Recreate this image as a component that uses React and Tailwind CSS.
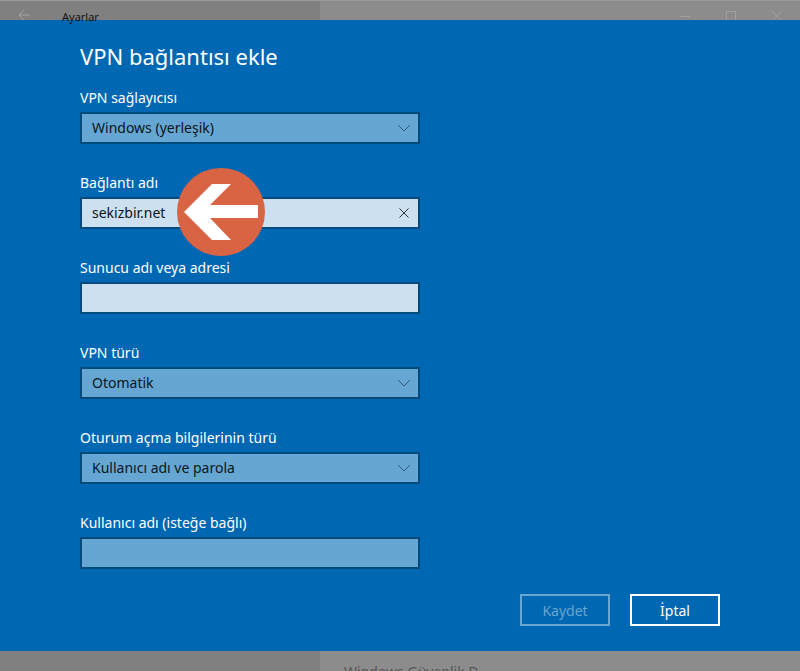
import React from "react";

function Chevron() {
  return (
    <svg width="14" height="8" viewBox="0 0 14 8" fill="none" stroke="#35597a" strokeWidth="1">
      <path d="M1 1l6 6 6-6" />
    </svg>
  );
}

function Select({ text }) {
  return (
    <div className="w-[340px] h-8 border-2 border-[#004a7c] bg-[#66a6d2] flex items-center justify-between pl-[10px] pr-[7px] text-[14px] text-[#0a1520]">
      <span className="-mt-[2px]">{text}</span>
      <Chevron />
    </div>
  );
}

function Input({ light, children }) {
  return (
    <div className={`w-[340px] h-8 border-2 border-[#004a7c] flex items-center justify-between pl-[10px] pr-[9px] text-[14px] text-[#0a1520] ${light ? "bg-[#cce0ef]" : "bg-[#66a6d2]"}`}>
      {children}
    </div>
  );
}

function Field({ label, children }) {
  return (
    <div className="h-[85px]">
      <div className="h-[33px] leading-[37px] text-[14px] text-white">{label}</div>
      {children}
    </div>
  );
}

export default function App() {
  return (
    <div className="w-[800px] h-[671px] overflow-hidden flex flex-col font-['Noto_Sans',sans-serif]">
      {/* dimmed title bar */}
      <div className="h-5 shrink-0 flex bg-[#8c8c8c] border-t border-[#9a9a9a] relative">
        <div className="w-[320px] bg-[#808080] flex items-center pl-[18px]">
          <svg width="12" height="12" viewBox="0 0 12 12" fill="none" stroke="#a3a3a3" strokeWidth="1" className="mt-[8px]">
            <path d="M6 1L1 6l5 5M1 6h11" />
          </svg>
          <span className="ml-[32px] text-[11px] leading-none text-[#111] mt-[11px] relative z-10">Ayarlar</span>
        </div>
        <div className="flex-1 relative">
          <svg width="480" height="20" viewBox="0 0 480 20" fill="none" stroke="#a0a0a0" strokeWidth="1" className="absolute left-0 -top-px">
            <path d="M360 16.500h10M406.500 11.500h9v9h-9zM452 11l10 10M462 11l-10 10" />
          </svg>
        </div>
      </div>

      {/* dialog */}
      <div className="h-[631px] shrink-0 bg-[#0067b3] pl-20 relative">
        <h1 className="h-[60px] pt-[18px] text-[22px] leading-[36px] font-normal text-white">VPN bağlantısı ekle</h1>
        <div className="-mt-px">
          <Field label="VPN sağlayıcısı"><Select text="Windows (yerleşik)" /></Field>
          <Field label="Bağlantı adı">
            <Input light>
              <span className="-mt-[2px]">sekizbir.net</span>
              <svg width="10" height="10" viewBox="0 0 10 10" fill="none" stroke="#333" strokeWidth="1">
                <path d="M0.500 0.500l9 9M9.500 0.500l-9 9" />
              </svg>
            </Input>
          </Field>
          <Field label="Sunucu adı veya adresi"><Input light /></Field>
          <Field label="VPN türü"><Select text="Otomatik" /></Field>
          <Field label="Oturum açma bilgilerinin türü"><Select text="Kullanıcı adı ve parola" /></Field>
          <Field label="Kullanıcı adı (isteğe bağlı)"><Input /></Field>
        </div>

        <div className="absolute right-20 top-[574px] flex gap-5">
          <div className="w-[90px] h-8 border-2 border-[#66a6d2] text-[#66a6d2] text-[14px] flex items-center justify-center">Kaydet</div>
          <div className="w-[90px] h-8 border-2 border-white text-white text-[14px] flex items-center justify-center">İptal</div>
        </div>

        {/* arrow badge over the form */}
        <div className="absolute left-[177px] top-[148px] w-[88px] h-[88px] rounded-full bg-[#d96444]">
          <svg width="88" height="88" viewBox="0 0 88 88" fill="#fff">
            <path d="M7 44L35 16h19L33 37h48v13H33l21 22H35z" />
          </svg>
        </div>
      </div>

      {/* dimmed bottom strip */}
      <div className="h-5 shrink-0 flex bg-[#8c8c8c] overflow-hidden">
        <div className="w-[320px] bg-[#808080]" />
        <div className="pl-6 pt-[11px] text-[14px] leading-[20px] text-[#555]">Windows Güvenlik D</div>
      </div>
    </div>
  );
}
